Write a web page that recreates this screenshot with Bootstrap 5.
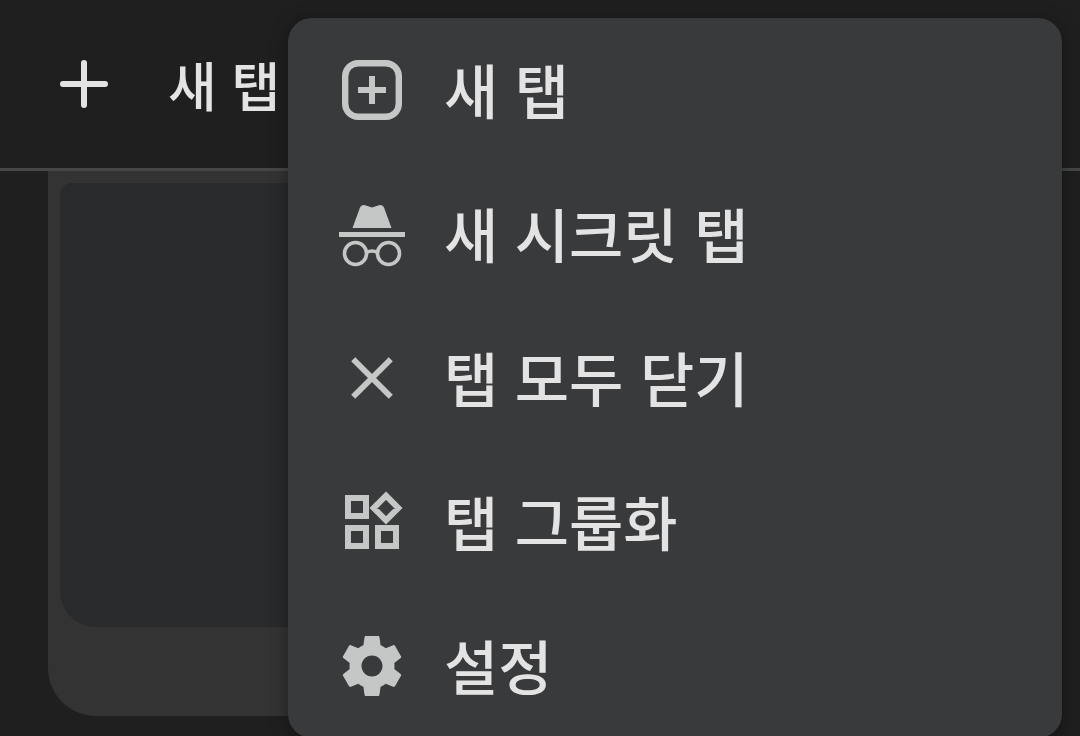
<!DOCTYPE html>
<html lang="ko" data-bs-theme="dark">
<head>
<meta charset="utf-8">
<meta name="viewport" content="width=device-width, initial-scale=1">
<title>새 탭</title>
<link href="https://cdn.jsdelivr.net/npm/bootstrap@5.3.0/dist/css/bootstrap.min.css" rel="stylesheet">
<style>
  body {
    background: #1f1f1f;
    color: #e3e3e3;
    font-family: "Noto Sans CJK KR", sans-serif;
    font-weight: 500;
  }
  .tab-bar { height: 171px; border-bottom: 3px solid #444746; }
  .new-tab { gap: 60px; padding: 0 60px; font-size: 53px; line-height: 72px; font-weight: 500; color: inherit; }
  .tab-grid { padding: 0 48px; }
  .tab-card { background: #333; padding: 12px 12px 89px; border-radius: 0 0 48px 48px; }
  .tab-preview { height: 444px; background: #292a2c; border-radius: 12px 12px 36px 36px; }
  .tab-menu {
    top: 18px; left: 288px; right: 18px;
    background: #393a3c;
    border-radius: 24px;
    box-shadow: 0 3px 18px rgba(0, 0, 0, .4);
  }
  .tab-menu .dropdown-item {
    height: 144px; padding: 0 48px; gap: 36px;
    font-size: 59px; line-height: 84px; font-weight: 500; color: #e3e3e3;
  }
  .tab-menu span { padding-bottom: 2px; }
  .menu-icon { width: 72px; height: 72px; flex: none; color: #c4c7c5; }
</style>
</head>
<body class="min-vh-100 position-relative overflow-hidden">
<header class="tab-bar d-flex align-items-center">
  <button type="button" class="new-tab btn border-0 d-flex align-items-center text-nowrap">
    <svg width="48" height="48" viewBox="0 0 48 48" fill="none" stroke="currentColor" stroke-width="6" stroke-linecap="round" aria-hidden="true"><path d="M24 3v42M3 24h42"/></svg>
    <span>새 탭</span>
  </button>
</header>

<main class="tab-grid row g-0">
  <div class="col-6">
    <div class="tab-card"><div class="tab-preview"></div></div>
  </div>
</main>

<nav class="tab-menu position-absolute overflow-hidden" aria-label="탭 메뉴">
  <button type="button" class="dropdown-item d-flex align-items-center">
    <svg class="menu-icon" viewBox="0 0 72 72" fill="none" stroke="currentColor" aria-hidden="true"><rect x="9.2" y="9.2" width="53.6" height="53.6" rx="13" stroke-width="6.4"/><path d="M36 22v28M22 36h28" stroke-width="6"/></svg>
    <span>새 탭</span>
  </button>
  <button type="button" class="dropdown-item d-flex align-items-center">
    <svg class="menu-icon" viewBox="0 0 72 72" fill="currentColor" aria-hidden="true"><path d="M16.5 30 24 9.5Q25.500 6 29 7.200L36 9.500 43 7.200Q46.500 6 48 9.500L55.500 30ZM3 34h66v5H3z"/><g fill="none" stroke="currentColor" stroke-width="3.600"><circle cx="19.500" cy="55.500" r="11"/><circle cx="52.500" cy="55.500" r="11"/><path d="M30.500 54.500q5.500-3 11 0"/></g></svg>
    <span>새 시크릿 탭</span>
  </button>
  <button type="button" class="dropdown-item d-flex align-items-center">
    <svg class="menu-icon" viewBox="0 0 72 72" fill="none" stroke="currentColor" stroke-width="5.800" aria-hidden="true"><path d="M17.200 17.200l37.600 37.600M54.800 17.200 17.200 54.800"/></svg>
    <span>탭 모두 닫기</span>
  </button>
  <button type="button" class="dropdown-item d-flex align-items-center">
    <svg class="menu-icon" viewBox="0 0 72 72" fill="none" stroke="currentColor" stroke-width="6" aria-hidden="true"><path d="M12 12h18v18H12zM12 42h18v18H12zM42 42h18v18H42zM50 9.700 62.300 22 50 34.300 37.700 22z"/></svg>
    <span>탭 그룹화</span>
  </button>
  <button type="button" class="dropdown-item d-flex align-items-center">
    <svg class="menu-icon" viewBox="0 0 24 24" fill="currentColor" aria-hidden="true"><path d="M19.430 12.980c.040-.320.070-.640.070-.980s-.030-.660-.070-.980l2.110-1.650c.190-.150.240-.420.120-.640l-2-3.460c-.120-.220-.390-.300-.610-.220l-2.490 1c-.520-.400-1.080-.730-1.690-.980l-.380-2.650C14.460 2.180 14.250 2 14 2h-4c-.250 0-.460.180-.490.420l-.380 2.650c-.610.250-1.170.590-1.690.980l-2.490-1c-.230-.090-.490 0-.610.220l-2 3.460c-.130.220-.070.490.120.640l2.110 1.650c-.040.320-.070.650-.070.980s.030.660.070.980l-2.110 1.650c-.190.150-.240.420-.120.640l2 3.460c.120.220.390.300.610.220l2.490-1c.520.400 1.080.730 1.690.980l.380 2.650c.030.240.240.420.490.420h4c.250 0 .460-.180.490-.420l.380-2.650c.610-.250 1.170-.590 1.690-.980l2.490 1c.230.090.490 0 .610-.220l2-3.460c.120-.220.070-.490-.120-.640l-2.110-1.650zM12 15.500c-1.930 0-3.500-1.570-3.500-3.500s1.570-3.500 3.500-3.500 3.500 1.570 3.500 3.500-1.570 3.500-3.500 3.500z"/></svg>
    <span>설정</span>
  </button>
</nav>
<script src="https://cdn.jsdelivr.net/npm/bootstrap@5.3.0/dist/js/bootstrap.bundle.min.js"></script>
</body>
</html>
